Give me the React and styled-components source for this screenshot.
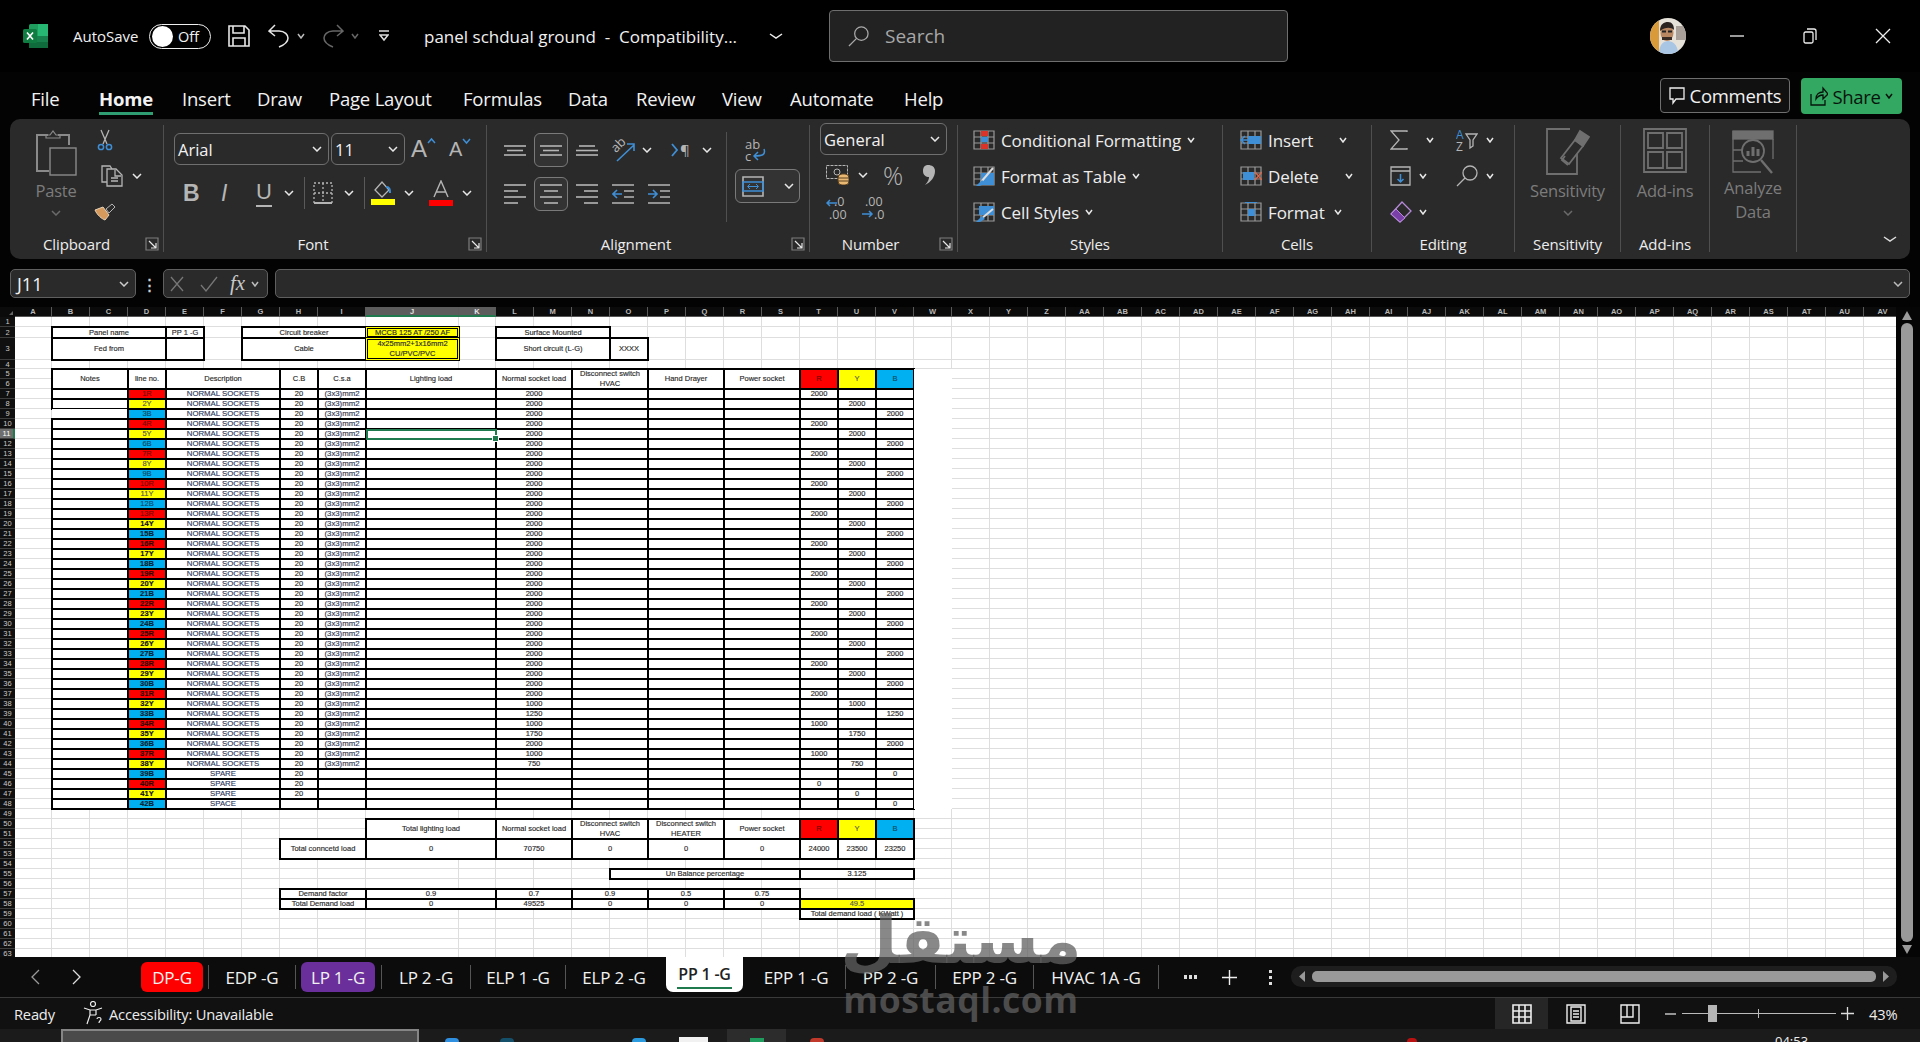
import React from 'react';
import styled, { createGlobalStyle } from 'styled-components';

const UI = `"Open Sans", "Noto Sans", sans-serif`;
const GRAY = '#b5b5b5';
const BLUE = '#3f8fd6';
const DIM = '#7c7c7c';

const Global = createGlobalStyle`
  html, body { margin: 0; padding: 0; background: #000; }
  * { box-sizing: border-box; }
`;

const Page = styled.div`
  position: relative;
  width: 1920px;
  height: 1042px;
  overflow: hidden;
  background: #030303;
  color: #f2f2f2;
  font-family: ${UI};
  display: flex;
  flex-direction: column;
`;

/* generic bits */
const Slot = styled.span`
  flex: none;
  display: flex;
  align-items: center;
  width: ${p => p.$w}px;
  margin-left: ${p => p.$ml || 0}px;
  justify-content: ${p => (p.$center ? 'center' : 'flex-start')};
`;

const IconSvg = styled.svg`
  display: block;
  flex: none;
`;

const Ico = ({ w, h, s = GRAY, sw = 1.3, children }) => (
  <IconSvg width={w} height={h} viewBox={`0 0 ${w} ${h}`} fill="none" stroke={s} strokeWidth={sw}>
    {children}
  </IconSvg>
);

const Chev = ({ c = '#e8e8e8', w = 10 }) => (
  <Ico w={w} h={6} s={c} sw={1.5}>
    <path d={`M1 1l${w / 2 - 1} 4 ${w / 2 - 1}-4`} />
  </Ico>
);

/* ---------- title bar ---------- */
const TitleBar = styled.header`
  height: 72px;
  flex: none;
  display: flex;
  align-items: center;
  padding-left: 23px;
  background: #000;
`;
const TitleLabel = styled.span`
  font-size: 15px;
  color: #f0f0f0;
  white-space: nowrap;
`;
const DocTitle = styled(TitleLabel)`
  font-size: 17px;
`;
const Toggle = styled.span`
  width: 62px;
  height: 25px;
  border: 1.5px solid #eee;
  border-radius: 13px;
  display: flex;
  align-items: center;
  padding-left: 2px;
  gap: 5px;
  font-size: 14.5px;
  &::before {
    content: '';
    width: 21px;
    height: 21px;
    border-radius: 50%;
    background: #fff;
  }
`;
const SearchBox = styled.div`
  width: 459px;
  height: 52px;
  flex: none;
  background: #222;
  border: 1px solid #6e6e6e;
  border-radius: 4px;
  display: flex;
  align-items: center;
  padding-left: 18px;
  gap: 16px;
  font-size: 19px;
  color: #a8a8a8;
`;
const WinButton = styled.span`
  width: 73px;
  flex: none;
  display: flex;
  justify-content: center;
`;

const ExcelLogo = () => (
  <IconSvg width={25} height={24} viewBox="0 0 25 24">
    <rect x="6" y="0" width="19" height="24" rx="1.5" fill="#1f9d5f" />
    <rect x="15" y="0" width="10" height="12" fill="#27b873" />
    <rect x="6" y="12" width="19" height="6" fill="#17804c" />
    <rect x="6" y="18" width="19" height="6" fill="#0f6b3c" />
    <rect x="0" y="5" width="14" height="14" rx="1.5" fill="#107c41" />
    <path d="M4 8.5l6 7M10 8.5l-6 7" stroke="#fff" strokeWidth="1.6" />
  </IconSvg>
);

const Avatar = () => (
  <IconSvg width={36} height={36} viewBox="0 0 36 36">
    <defs>
      <clipPath id="av"><circle cx="18" cy="18" r="18" /></clipPath>
    </defs>
    <g clipPath="url(#av)">
      <rect width="36" height="36" fill="#e6e2da" />
      <rect width="9" height="36" fill="#d99a3a" />
      <rect x="26" y="8" width="10" height="14" fill="#a8a099" />
      <path d="M9 36c0-10 5-13 9-13s10 3 10 13z" fill="#a9c6e4" />
      <ellipse cx="17" cy="15" rx="6.5" ry="8" fill="#b98762" />
      <path d="M10 13c0-7 4-9 8-9s6 3 6 8c-3-3-9-3-14 1z" fill="#2b2320" />
      <rect x="12" y="19" width="10" height="3" fill="#3a2b25" />
      <rect x="12" y="12.5" width="4" height="2" fill="#222" />
      <rect x="18" y="12.5" width="4" height="2" fill="#222" />
    </g>
  </IconSvg>
);

/* ---------- menu row ---------- */
const MenuRow = styled.nav`
  height: 47px;
  flex: none;
  display: flex;
  align-items: flex-start;
  padding: 6px 18px 0 31px;
  background: #030303;
`;
const MenuItem = styled.span`
  flex: none;
  width: ${p => p.$w}px;
  margin-top: 7px;
`;
const MenuLabel = styled.span`
  display: inline-block;
  height: 30px;
  line-height: 27px;
  font-size: 18.5px;
  font-weight: ${p => (p.$active ? 700 : 400)};
  letter-spacing: -0.2px;
  white-space: nowrap;
  border-bottom: 3px solid ${p => (p.$active ? '#2f9e72' : 'transparent')};
`;
const CommentsButton = styled.button`
  margin-left: auto;
  width: 130px;
  height: 35px;
  background: #111;
  border: 1px solid #6f6f6f;
  border-radius: 4px;
  color: #f2f2f2;
  font: 18.5px ${UI};
  letter-spacing: -0.3px;
  display: flex;
  align-items: center;
  justify-content: center;
  gap: 5px;
  padding: 0;
`;
const ShareButton = styled.button`
  margin-left: 11px;
  width: 101px;
  height: 36px;
  background: #33a862;
  border: 0;
  border-radius: 4px;
  color: #07140c;
  font: 18.5px ${UI};
  letter-spacing: -0.3px;
  display: flex;
  align-items: center;
  justify-content: center;
  gap: 4px;
  padding: 0;
`;

/* ---------- ribbon ---------- */
const Ribbon = styled.section`
  height: 140px;
  flex: none;
  margin: 0 10px;
  background: #2a2a2a;
  border-radius: 10px;
  display: flex;
`;
const Group = styled.div`
  width: ${p => p.$w}px;
  flex: none;
  height: 127px;
  margin-top: 6px;
  border-right: 1px solid #4f4f4f;
  display: flex;
  flex-direction: column;
`;
const GroupBody = styled.div`
  height: 103px;
  flex: none;
  display: flex;
  padding-left: ${p => p.$pl || 0}px;
`;
const GroupFoot = styled.div`
  height: 24px;
  padding-top: 8px;
  display: flex;
  align-items: center;
`;
const GroupLabel = styled.span`
  flex: 1;
  text-align: center;
  font-size: 15px;
  line-height: 17px;
  color: #ededed;
  letter-spacing: -0.1px;
  padding-right: ${p => p.$pr || 0}px;
`;
const Launcher = styled.span`
  flex: none;
  width: 18px;
`;
const ToolStack = styled.div`
  display: flex;
  flex-direction: column;
  gap: 12px;
  padding-top: 3px;
`;
const ToolRow = styled.div`
  display: flex;
  align-items: center;
  height: ${p => p.$h || 24}px;
  padding-left: ${p => p.$pl || 0}px;
  margin-top: ${p => p.$mt || 0}px;
`;
const PasteCol = styled.div`
  width: 72px;
  margin-left: 10px;
  padding-top: 5px;
  display: flex;
  flex-direction: column;
  align-items: center;
`;
const BigLabel = styled.span`
  line-height: 24px;
  font-size: 16.5px;
  letter-spacing: -0.2px;
  color: ${DIM};
  text-align: center;
  margin-top: ${p => p.$mt || 0}px;
  margin-bottom: 7px;
`;
const BigButton = styled.div`
  flex: 1;
  display: flex;
  flex-direction: column;
  align-items: center;
  padding-top: ${p => p.$pt || 3}px;
`;
const BigIconWrap = styled.div`
  height: ${p => p.$h || 49}px;
  margin-bottom: 2px;
`;
const Combo = styled.div`
  width: ${p => p.$w}px;
  height: ${p => p.$h || 32}px;
  flex: none;
  margin-left: ${p => p.$ml || 0}px;
  border: 1px solid #6f6f6f;
  border-radius: 6px;
  display: flex;
  align-items: center;
  justify-content: space-between;
  padding: 0 6px 0 3px;
  font-size: 16.5px;
`;
const ToolBox = styled.span`
  width: ${p => p.$w || 34}px;
  height: 34px;
  flex: none;
  display: flex;
  align-items: center;
  justify-content: center;
  background: #333;
  border: 1px solid #7a7a7a;
  border-radius: 6px;
  gap: ${p => p.$gap || 0}px;
`;
const Divider = styled.span`
  display: block;
  width: 1px;
  height: ${p => p.$h || 32}px;
  background: #5a5a5a;
`;
const AlignLeft = styled.div`
  width: 239px;
  flex: none;
  padding: 8px 0 0 17px;
  display: flex;
  flex-direction: column;
  gap: 10px;
`;
const AlignRight = styled.div`
  border-left: 1px solid #505050;
  height: 90px;
  margin-top: 7px;
  padding-left: 8px;
  display: flex;
  flex-direction: column;
`;
const NumberCol = styled.div`
  margin-left: 10px;
  margin-top: -2px;
  display: flex;
  flex-direction: column;
`;
const PercentSign = styled.span`
  font-size: 25px;
  line-height: 24px;
  font-weight: 300;
  color: ${GRAY};
`;
const ListRow = styled.div`
  display: flex;
  align-items: center;
  height: 24px;
  gap: ${p => p.$gap || 6}px;
  white-space: nowrap;
  font-size: 17px;
  letter-spacing: -0.1px;
  color: #ededed;
`;
const CollapseBox = styled.div`
  flex: 1;
  display: flex;
  align-items: flex-end;
  justify-content: flex-end;
  padding: 0 13px 17px 0;
`;

/* ---------- ribbon icons ---------- */
const Launch = () => (
  <Ico w={14} h={14} sw={1.2}>
    <path d="M1 13V1h12v12z" stroke={DIM} />
    <path d="M4 4l7 7M11 6v5H6" stroke="#e8e8e8" />
  </Ico>
);
const PasteIcon = () => (
  <Ico w={41} h={46} s="#8a8a8a" sw={2}>
    <path d="M12 5H1v36h12M22 5h11v10" />
    <path d="M10 8V5h4l3-4 3 4h4v3z" strokeWidth={1.2} />
    <rect x="14" y="18" width="26" height="27" strokeWidth={1.4} />
  </Ico>
);
const CutIcon = () => (
  <Ico w={16} h={22}>
    <path d="M4 1l6 14M12 1L6 15" />
    <circle cx="4" cy="18" r="2.6" stroke={BLUE} strokeWidth={1.5} />
    <circle cx="12" cy="18" r="2.6" stroke={BLUE} strokeWidth={1.5} />
  </Ico>
);
const CopyIcon = () => (
  <Ico w={22} h={22}>
    <path d="M6 17H1V1h8l2 3" />
    <path d="M6 4h9l6 6v11H6zM14 5v6h6M10 13h7M10 16h7" />
  </Ico>
);
const PainterIcon = () => (
  <IconSvg width={22} height={18} viewBox="0 0 22 18" fill="none">
    <path d="M1 7l8-3 6 8-4 5c-3-1-8-5-10-10z" fill="#d69a5d" stroke="#e6d3b8" />
    <path d="M12 6l6-5 3 3-6 6z" fill="#2a2a2a" stroke={GRAY} />
  </IconSvg>
);
const FontGlyph = styled.span`
  font-family: "Liberation Sans", sans-serif;
  font-weight: ${p => p.$w || 400};
  font-style: ${p => (p.$i ? 'italic' : 'normal')};
  font-size: ${p => p.$size || 20}px;
  line-height: 24px;
  color: ${p => p.$c || GRAY};
`;
const BoldIcon = () => <FontGlyph $w={700} $size={23}>B</FontGlyph>;
const UnderlineGlyph = styled(FontGlyph)`
  display: inline-block;
  height: 27px;
  border-bottom: 2px solid ${GRAY};
`;
const GrowA = styled.span`
  display: flex;
  align-items: flex-start;
  font-family: "Liberation Sans", sans-serif;
  font-size: ${p => p.$size}px;
  color: ${GRAY};
  line-height: 26px;
`;
const BordersIcon = () => (
  <Ico w={20} h={22}>
    <path d="M1 1h18v20H1zM10 1v20M1 11h18" strokeDasharray="2 2" />
    <path d="M1 21h18" strokeWidth={2} />
  </Ico>
);
const FillIcon = () => (
  <IconSvg width={24} height={24} viewBox="0 0 24 24" fill="none">
    <path d="M4 9L11 1l7 8-7 7z" stroke={GRAY} strokeWidth="1.3" />
    <path d="M15 6c4 0 4 3 4 6" stroke={BLUE} strokeWidth="2" />
    <rect y="18" width="24" height="6" fill="#ff0" />
  </IconSvg>
);
const FontColorIcon = () => (
  <IconSvg width={24} height={26} viewBox="0 0 24 26" fill="none">
    <path d="M5 17L12 1l7 16M7.5 12h9" stroke={GRAY} strokeWidth="1.4" />
    <rect y="20" width="24" height="6" fill="#f00" />
  </IconSvg>
);
const HLines = ({ rows, h }) => (
  <Ico w={22} h={h} sw={1.6}>
    {rows.map(([a, b, y]) => <path key={y} d={`M${a} ${y}H${b}`} />)}
  </Ico>
);
const AlignTop = () => <HLines h={11} rows={[[0, 22, 1], [3, 19, 5.5], [0, 22, 10]]} />;
const AlignBottom = () => <HLines h={11} rows={[[3, 19, 1], [0, 22, 5.5], [0, 22, 10]]} />;
const ParaLeft = () => <HLines h={21} rows={[[0, 22, 1], [0, 14, 7], [0, 22, 13], [0, 14, 19]]} />;
const ParaCenter = () => <HLines h={21} rows={[[0, 22, 1], [4, 18, 7], [0, 22, 13], [4, 18, 19]]} />;
const ParaRight = () => <HLines h={21} rows={[[0, 22, 1], [8, 22, 7], [0, 22, 13], [8, 22, 19]]} />;
const IndentLess = () => (
  <Ico w={22} h={21} sw={1.6}>
    <path d="M0 1h22M12 7h10M12 13h10M0 19h22" />
    <path d="M10 10H1m4-4l-4 4 4 4" stroke={BLUE} />
  </Ico>
);
const IndentMore = () => (
  <Ico w={22} h={21} sw={1.6}>
    <path d="M0 1h22M12 7h10M12 13h10M0 19h22" />
    <path d="M0 10h9m-4-4l4 4-4 4" stroke={BLUE} />
  </Ico>
);
const SvgLabel = styled.text`
  font-family: ${UI};
  font-size: ${p => p.$size || 13}px;
  fill: ${p => p.$c || GRAY};
  stroke: none;
`;
const OrientIcon = () => (
  <Ico w={24} h={23}>
    <SvgLabel x="0" y="11" transform="rotate(-45 6 8)">ab</SvgLabel>
    <path d="M5 22L22 6M15 5h7v7" stroke={BLUE} strokeWidth={1.6} />
  </Ico>
);
const ParaIcon = () => (
  <Ico w={20} h={14}>
    <path d="M1 1l5 6-5 6" stroke={BLUE} strokeWidth={1.8} />
    <SvgLabel x="9" y="13" $size={15}>¶</SvgLabel>
  </Ico>
);
const WrapIcon = () => (
  <Ico w={21} h={23}>
    <SvgLabel x="0" y="10" $size={13}>ab</SvgLabel>
    <SvgLabel x="0" y="22" $size={13}>c</SvgLabel>
    <path d="M19 10c2 6-2 7-10 7m4-4l-4 4 4 4" stroke={BLUE} strokeWidth={1.5} />
  </Ico>
);
const MergeIcon = () => (
  <Ico w={22} h={21} sw={1.6}>
    <path d="M1 1h20v19H1z" stroke={GRAY} />
    <path d="M1 6h20v9H1z" stroke={BLUE} />
    <path d="M6 10.5h10M8 8l-2.5 2.5L8 13M14 8l2.5 2.5L14 13" stroke={BLUE} strokeWidth={1} />
  </Ico>
);
const AccountingIcon = () => (
  <IconSvg width={23} height={20} viewBox="0 0 23 20" fill="none">
    <rect x="0.5" y="0.5" width="21" height="13" stroke={GRAY} strokeDasharray="3 1" />
    <circle cx="11" cy="7" r="3" stroke={GRAY} />
    <rect x="12" y="9" width="11" height="11" rx="4" fill="#e9b872" stroke="#5c4220" />
    <path d="M12 13h11M12 16h11" stroke="#5c4220" />
  </IconSvg>
);
const CommaIcon = () => (
  <IconSvg width={12} height={20} viewBox="0 0 12 20">
    <path d="M5 0c4 0 7 2 7 6 0 6-4 11-10 14 3-3 4-6 4-8-3 0-6-2-6-6s2-6 5-6z" fill={GRAY} />
  </IconSvg>
);
const DecimalMore = () => (
  <Ico w={24} h={24}>
    <SvgLabel x="8" y="10" $size={12.5}>.0</SvgLabel>
    <SvgLabel x="3" y="23" $size={12.5}>.00</SvgLabel>
    <path d="M11 7H1m3-3L1 7l3 3" stroke={BLUE} strokeWidth={1.5} />
  </Ico>
);
const DecimalLess = () => (
  <Ico w={24} h={24}>
    <SvgLabel x="4" y="10" $size={12.5}>.00</SvgLabel>
    <SvgLabel x="13" y="23" $size={12.5}>.0</SvgLabel>
    <path d="M1 18h10m-3-3l3 3-3 3" stroke={BLUE} strokeWidth={1.5} />
  </Ico>
);
const GridBase = ({ children }) => (
  <IconSvg width={22} height={20} viewBox="0 0 22 20" fill="none">
    <path d="M1 1h20v18H1zM1 7h20M1 13h20M8 1v18M15 1v18" stroke="#9a9a9a" strokeWidth="1.2" />
    {children}
  </IconSvg>
);
const CondFormatIcon = () => (
  <GridBase>
    <rect x="8" y="1" width="7" height="5" fill="#d9332a" />
    <rect x="8" y="7" width="7" height="5" fill={BLUE} />
    <rect x="8" y="14" width="7" height="5" fill="#d9332a" />
  </GridBase>
);
const FormatTableIcon = () => (
  <GridBase>
    <path d="M8 7h13v12H8z" fill={BLUE} />
    <path d="M20 2L8 16" stroke="#ddd" strokeWidth="2" />
    <path d="M9 14l3 3-5 3H3z" fill={BLUE} />
  </GridBase>
);
const CellStyleIcon = () => (
  <GridBase>
    <path d="M6 4h15v9H6z" fill={BLUE} />
    <path d="M20 7L8 17" stroke="#ddd" strokeWidth="2" />
    <path d="M9 14l3 3-5 3H3z" fill={BLUE} />
  </GridBase>
);
const InsertCellIcon = () => (
  <GridBase>
    <rect x="8" y="6" width="13" height="8" fill={BLUE} />
    <path d="M14 10H1m4-4l-4 4 4 4" stroke={BLUE} strokeWidth="1.5" />
  </GridBase>
);
const DeleteCellIcon = () => (
  <GridBase>
    <rect x="3" y="6" width="11" height="8" fill={BLUE} />
    <path d="M15 6l7 8M22 6l-7 8" stroke="#d8674e" strokeWidth="1.4" />
  </GridBase>
);
const FormatCellIcon = () => (
  <GridBase>
    <rect x="8" y="7" width="7" height="7" fill={BLUE} />
    <path d="M5 0h12" stroke={BLUE} strokeWidth="2" />
  </GridBase>
);
const SumIcon = () => (
  <Ico w={18} h={20}>
    <path d="M17 2V1H1l8 9-8 9h16v-1" />
  </Ico>
);
const SortIcon = () => (
  <Ico w={22} h={22}>
    <SvgLabel x="0" y="10" $size={12} $c={BLUE}>A</SvgLabel>
    <SvgLabel x="0" y="22" $size={12}>Z</SvgLabel>
    <path d="M10 5h11l-4 6v6l-3 2v-8z" />
  </Ico>
);
const FillDownIcon = () => (
  <Ico w={21} h={20}>
    <path d="M1 1h19v18H1zM1 5h19" />
    <path d="M10.5 8v8m-3-3l3 3 3-3" stroke={BLUE} strokeWidth={1.5} />
  </Ico>
);
const FindIcon = ({ s = GRAY, size = 22 }) => (
  <IconSvg width={size} height={size} viewBox="0 0 22 22" fill="none" stroke={s} strokeWidth="1.3">
    <circle cx="14" cy="8" r="7" />
    <path d="M9 13l-8 8" />
  </IconSvg>
);
const EraserIcon = () => (
  <IconSvg width={22} height={22} viewBox="0 0 22 22" fill="none">
    <path d="M1 13L12 1l9 9-11 11z" stroke="#b68ad8" strokeWidth="1.3" />
    <path d="M1 13l5-5 9 9-5 4z" fill="#7b3fa8" stroke="#b68ad8" />
  </IconSvg>
);
const SensitivityIcon = () => (
  <Ico w={44} h={47} s="#6f6f6f" sw={1.8}>
    <path d="M24 1H1v45h30V26" />
    <path d="M15 30l14-18 8 6-14 18z" />
    <path d="M29 12l5-9 9 6-6 9z" fill="#6f6f6f" />
    <path d="M19 28l-3 4 6 5" />
  </Ico>
);
const AddinsIcon = () => (
  <Ico w={44} h={45} s="#6f6f6f" sw={1.8}>
    <path d="M1 1h42v43H1z" />
    <path d="M5 5h15v15H5zM24 5h15v15H24zM5 24h15v16H5zM24 24h15v16H24z" />
  </Ico>
);
const AnalyzeIcon = () => (
  <Ico w={42} h={44} s="#6f6f6f" sw={1.3}>
    <rect x="1" y="1" width="40" height="8" fill="#6f6f6f" />
    <path d="M1 1v41h28M41 9v20M1 20h10M1 31h10" />
    <circle cx="21" cy="21" r="11" strokeWidth={1.8} />
    <path d="M29 30l11 13" strokeWidth={2.4} />
    <path d="M16 26v-5M21 26v-9M26 26v-7" strokeWidth={3} />
  </Ico>
);

/* ---------- formula bar ---------- */
const FormulaBar = styled.div`
  height: 29px;
  flex: none;
  margin: 10px 10px 0;
  display: flex;
  align-items: stretch;
`;
const FieldBox = styled.div`
  background: #2a2a2a;
  border: 1px solid #5f5f5f;
  border-radius: 5px;
  display: flex;
  align-items: center;
  flex: ${p => (p.$grow ? 1 : 'none')};
  width: ${p => (p.$w ? `${p.$w}px` : 'auto')};
  margin-left: ${p => p.$ml || 0}px;
  padding: 0 6px;
  justify-content: ${p => (p.$between ? 'space-between' : 'flex-start')};
  font-size: 18px;
`;
const KebabDots = styled.span`
  width: 27px;
  flex: none;
  display: flex;
  justify-content: center;
  align-items: center;
  font-weight: 700;
  font-size: 15px;
  color: #d0d0d0;
`;
const FxText = styled.span`
  font-family: "Liberation Serif", serif;
  font-style: italic;
  font-size: 21px;
  color: #c8c8c8;
`;

/* ---------- sheet ---------- */
const SheetArea = styled.div`
  height: 650px;
  flex: none;
  margin-top: 9px;
  display: flex;
  background: #050505;
`;
const SheetClip = styled.div`
  width: 1896px;
  height: 650px;
  flex: none;
  overflow: hidden;
`;
const Grid = styled.div`
  display: grid;
  grid-template-columns: ${p => p.$cols};
  grid-template-rows: ${p => p.$rows};
  width: max-content;
  font-family: "Liberation Sans", Arial, sans-serif;
`;
const Corner = styled.div`
  grid-column: 1;
  grid-row: 1;
  background: #0b0b0b;
  display: flex;
  align-items: flex-end;
  justify-content: flex-end;
  padding: 0 2px 2px 0;
  &::after {
    content: '';
    border-left: 4px solid transparent;
    border-bottom: 4px solid #666;
  }
`;
const ColHead = styled.div`
  grid-row: 1;
  grid-column: ${p => p.$col};
  background: ${p => (p.$on ? '#5c5c5c' : '#0b0b0b')};
  border-right: 1px solid #5a5a5a;
  border-bottom: ${p => (p.$on ? '2px solid #1f7a4d' : '1px solid #555')};
  color: ${p => (p.$on ? '#e4e4e4' : '#b9b9b9')};
  font-size: 7.5px;
  font-weight: 700;
  line-height: 9px;
  text-align: center;
`;
const RowHead = styled.div`
  grid-column: 1;
  grid-row: ${p => p.$row};
  background: ${p => (p.$on ? '#6e6e6e' : '#101010')};
  border-bottom: 1px solid #3c3c3c;
  border-right: ${p => (p.$on ? '2px solid #1f7a4d' : '0')};
  color: ${p => (p.$on ? '#fff' : '#c9c9c9')};
  font-size: 7.5px;
  display: flex;
  align-items: center;
  justify-content: center;
`;
const Cell = styled.div`
  position: relative;
  grid-column: ${p => p.$col} / span ${p => p.$cs};
  grid-row: ${p => p.$row} / span ${p => p.$rs};
  min-width: 0;
  min-height: 0;
  background: ${p => p.$bg || '#fff'};
  color: ${p => p.$c || '#2a2a2a'};
  font-size: ${p => p.$size || 7.5}px;
  font-weight: ${p => (p.$bold ? 700 : 400)};
  line-height: ${p => p.$lh || 8}px;
  -webkit-text-stroke: 0.15px currentColor;
  white-space: pre-line;
  text-align: center;
  display: flex;
  align-items: center;
  justify-content: center;
  ${p => {
    if (p.$double) return `border: 1px solid ${p.$bg}; outline: 1px solid #000; box-shadow: inset 0 0 0 1px #000;`;
    if (p.$thick) return 'border: 1px solid #000; outline: 1px solid #000;';
    if (p.$blank) return 'border: 0;';
    return 'border-right: 1px solid #dedede; border-bottom: 1px solid #dedede;';
  }}
`;
const Selection = styled.span`
  position: absolute;
  inset: -1px -2px -2px -1px;
  border: 2px solid #1f7a4d;
  z-index: 2;
  &::after {
    content: '';
    position: absolute;
    right: -3px;
    bottom: -3px;
    width: 5px;
    height: 5px;
    background: #1f7a4d;
    outline: 1px solid #fff;
  }
`;
const VScroll = styled.div`
  flex: 1;
  display: flex;
  flex-direction: column;
  align-items: center;
  padding: 4px 2px 3px 0;
  gap: 3px;
`;
const VThumb = styled.div`
  flex: 1;
  width: 12px;
  border-radius: 6px;
  background: #9a9a9a;
`;
const VArrow = styled.span`
  width: 0;
  height: 0;
  border-left: 5px solid transparent;
  border-right: 5px solid transparent;
  ${p => (p.$up ? 'border-bottom: 9px solid #9a9a9a;' : 'border-top: 9px solid #9a9a9a;')}
`;

const colName = i => (i < 26 ? String.fromCharCode(65 + i) : 'A' + String.fromCharCode(65 + i - 26));
const colIdx = s => (s.length === 1 ? s.charCodeAt(0) - 65 : 26 + s.charCodeAt(1) - 65) + 2;
const COL_W = [37, 38, 38, 38, 38, 38, 38, 38, 48, 93, 37, ...Array(37).fill(38)];
const ROW_H = Array.from({ length: 63 }, (_, i) => [10, 11, 22, 9][i] || 10);
const RED = '#ff0000';
const YEL = '#ffff00';
const SKY = '#00b0f0';

const buildCells = () => {
  const out = [];
  const add = (c1, c2, r1, r2, text = '', o = {}) =>
    out.push({ col: colIdx(c1), cs: colIdx(c2) - colIdx(c1) + 1, row: r1 + 1, rs: r2 - r1 + 1, text, thick: true, ...o });

  // header blocks
  add('B', 'D', 2, 2, 'Panel name');
  add('E', 'E', 2, 2, 'PP 1 -G');
  add('B', 'D', 3, 3, 'Fed from');
  add('E', 'E', 3, 3);
  add('G', 'I', 2, 2, 'Circuit breaker');
  add('J', 'J', 2, 2, 'MCCB 125 AT /250 AF', { bg: YEL, double: true });
  add('G', 'I', 3, 3, 'Cable');
  add('J', 'J', 3, 3, '4x25mm2+1x16mm2\nCU/PVC/PVC', { bg: YEL, double: true, lh: 10 });
  add('L', 'N', 2, 2, 'Surface Mounted');
  add('L', 'N', 3, 3, 'Short circuit (L-G)');
  add('O', 'O', 3, 3, 'XXXX');

  const loadHead = (r1, r2, nxt) => {
    add('J', 'K', r1, r2, nxt.light);
    add('L', 'M', r1, r2, 'Normal socket load');
    add('N', 'O', r1, r2, 'Disconnect switch\nHVAC', { lh: 10 });
    add('P', 'Q', r1, r2, nxt.hand, { lh: 10 });
    add('R', 'S', r1, r2, 'Power socket');
    add('T', 'T', r1, r2, 'R', { bg: RED, c: '#6d0000' });
    add('U', 'U', r1, r2, 'Y', { bg: YEL, c: '#555' });
    add('V', 'V', r1, r2, 'B', { bg: SKY, c: '#0b4a66' });
  };

  // main table head
  add('B', 'C', 5, 6, 'Notes');
  add('D', 'D', 5, 6, 'line no.');
  add('E', 'G', 5, 6, 'Description');
  add('H', 'H', 5, 6, 'C.B');
  add('I', 'I', 5, 6, 'C.s.a');
  loadHead(5, 6, { light: 'Lighting load', hand: 'Hand Drayer' });

  // circuits
  const special = { 32: 1000, 33: 1250, 34: 1000, 35: 1750, 36: 2000, 37: 1000, 38: 750, 39: '', 40: '', 41: '', 42: '' };
  for (let n = 1; n <= 42; n++) {
    const r = n + 6;
    const phase = (n - 1) % 3;
    const load = n in special ? special[n] : 2000;
    const bold = n >= 14;
    const tone = [
      { bg: RED, c: bold ? '#300' : '#7a0000' },
      { bg: YEL, c: bold ? '#111' : '#555' },
      { bg: SKY, c: bold ? '#07222e' : '#0b4a66' },
    ][phase];
    if (n === 3) add('B', 'C', r, r, '', { thick: false, blank: true });
    else add('B', 'C', r, r);
    add('D', 'D', r, r, `${n}${'RYB'[phase]}`, { ...tone, bold });
    const desc = n <= 38 ? 'NORMAL SOCKETS' : n === 42 ? 'SPACE' : 'SPARE';
    add('E', 'G', r, r, desc, { c: '#2f3a60', size: 7.8 });
    add('H', 'H', r, r, n === 42 ? '' : '20');
    add('I', 'I', r, r, n <= 38 ? '(3x3)mm2' : '', { c: '#343a52', size: 7.8 });
    add('J', 'K', r, r, '', { selected: n === 5 });
    add('L', 'M', r, r, String(load));
    add('N', 'O', r, r);
    add('P', 'Q', r, r);
    add('R', 'S', r, r);
    const shown = load === '' ? '0' : String(load);
    add('T', 'T', r, r, phase === 0 ? shown : '');
    add('U', 'U', r, r, phase === 1 ? shown : '');
    add('V', 'V', r, r, phase === 2 ? shown : '');
  }

  // totals
  loadHead(50, 51, { light: 'Total lighting load', hand: 'Disconnect switch\nHEATER' });
  add('H', 'I', 52, 53, 'Total conncetd load');
  [['J', 'K', '0'], ['L', 'M', '70750'], ['N', 'O', '0'], ['P', 'Q', '0'], ['R', 'S', '0'], ['T', 'T', '24000'], ['U', 'U', '23500'], ['V', 'V', '23250']]
    .forEach(([a, b, t]) => add(a, b, 52, 53, t));
  add('O', 'S', 55, 55, 'Un Balance percentage');
  add('T', 'V', 55, 55, '3.125');
  add('H', 'I', 57, 57, 'Demand factor');
  add('H', 'I', 58, 58, 'Total Demand load');
  [['J', 'K', '0.9', '0'], ['L', 'M', '0.7', '49525'], ['N', 'O', '0.9', '0'], ['P', 'Q', '0.5', '0'], ['R', 'S', '0.75', '0']]
    .forEach(([a, b, f, d]) => {
      add(a, b, 57, 57, f);
      add(a, b, 58, 58, d);
    });
  add('T', 'V', 58, 58, '49.5', { bg: YEL, c: '#555' });
  add('T', 'V', 59, 59, 'Total demand load  ( KWatt )');
  // column W has no grid lines alongside the table
  for (let r = 5; r <= 48; r++) out.push({ col: colIdx('W'), cs: 1, row: r + 1, rs: 1, text: '', wBlank: true });
  return out;
};

const Sheet = () => {
  const merged = buildCells();
  const taken = new Set();
  merged.forEach(m => {
    for (let r = m.row; r < m.row + m.rs; r++) for (let c = m.col; c < m.col + m.cs; c++) taken.add(`${r}:${c}`);
  });
  const plain = [];
  for (let r = 2; r <= 64; r++) {
    for (let c = 2; c <= 49; c++) {
      if (!taken.has(`${r}:${c}`)) plain.push(<Cell key={`${r}:${c}`} $col={c} $row={r} $cs={1} $rs={1} />);
    }
  }
  return (
    <Grid
      $cols={`15px ${COL_W.map(w => `${w}px`).join(' ')}`}
      $rows={`10px ${ROW_H.map(h => `${h}px`).join(' ')}`}
    >
      <Corner />
      {COL_W.map((_, i) => (
        <ColHead key={i} $col={i + 2} $on={i === 9 || i === 10}>{colName(i)}</ColHead>
      ))}
      {ROW_H.map((_, i) => (
        <RowHead key={i} $row={i + 2} $on={i === 10}>{i + 1}</RowHead>
      ))}
      {plain}
      {merged.map(m => (
        <Cell
          key={`m${m.row}:${m.col}`}
          $col={m.col}
          $cs={m.cs}
          $row={m.row}
          $rs={m.rs}
          $thick={m.thick}
          $blank={m.blank || m.wBlank}
          $double={m.double}
          $bg={m.bg}
          $c={m.c}
          $bold={m.bold}
          $size={m.size}
          $lh={m.lh}
        >
          {m.text}
          {m.selected && <Selection />}
        </Cell>
      ))}
    </Grid>
  );
};

/* ---------- sheet tabs ---------- */
const TabBar = styled.div`
  height: 40px;
  flex: none;
  display: flex;
  align-items: flex-start;
  padding-top: 5px;
  background: #0c0c0c;
  font-size: 17px;
  letter-spacing: -0.2px;
`;
const SheetTab = styled.span`
  flex: none;
  width: ${p => p.$w}px;
  height: 30px;
  margin-left: ${p => p.$ml || 0}px;
  border-radius: ${p => (p.$bg ? 6 : 0)}px;
  background: ${p => p.$bg || 'transparent'};
  display: flex;
  align-items: center;
  justify-content: center;
  white-space: nowrap;
`;
const ActiveTab = styled.span`
  flex: none;
  width: 77px;
  height: 35px;
  margin: -5px 0 0 ${p => p.$ml}px;
  background: #fff;
  color: #222;
  border-radius: 0 0 7px 7px;
  font-size: 16px;
  font-weight: 600;
  display: flex;
  flex-direction: column;
  align-items: center;
  justify-content: flex-end;
  white-space: nowrap;
  &::after {
    content: '';
    width: 55px;
    height: 2px;
    background: #1f7a4d;
    margin: 2px 0 3px;
  }
`;
const TabSep = styled.span`
  flex: none;
  width: 1px;
  height: 24px;
  margin: 3px 0 0 ${p => p.$ml || 0}px;
  background: #555;
`;
const BarGlyph = styled.span`
  flex: none;
  height: 30px;
  display: flex;
  align-items: center;
  justify-content: center;
  width: ${p => p.$w}px;
  margin-left: ${p => p.$ml || 0}px;
  color: #ddd;
`;
const HScroll = styled.div`
  width: 606px;
  height: 21px;
  flex: none;
  margin: 4px 0 0 ${p => p.$ml}px;
  background: #1e1e1e;
  border-radius: 10px;
  display: flex;
  align-items: center;
  padding: 0 8px;
  gap: 7px;
`;
const HThumb = styled.div`
  flex: 1;
  height: 11px;
  border-radius: 5px;
  background: #999;
`;

/* ---------- status + taskbar ---------- */
const StatusBar = styled.footer`
  height: 32px;
  flex: none;
  display: flex;
  align-items: center;
  padding-left: 14px;
  background: #111;
  border-top: 1px solid #3a3a3a;
  font-size: 14.7px;
  letter-spacing: -0.2px;
  color: #ededed;
  white-space: nowrap;
`;
const ViewButton = styled.span`
  flex: none;
  width: 53px;
  height: 31px;
  display: flex;
  align-items: center;
  justify-content: center;
  background: ${p => (p.$on ? '#262626' : 'transparent')};
  margin-left: ${p => p.$ml || 0}px;
`;
const Slider = styled.span`
  position: relative;
  width: 154px;
  height: 1px;
  flex: none;
  margin-left: ${p => p.$ml}px;
  background: #bbb;
  &::before {
    content: '';
    position: absolute;
    left: 26px;
    top: -8px;
    width: 9px;
    height: 17px;
    background: #b5b5b5;
  }
  &::after {
    content: '';
    position: absolute;
    left: 76px;
    top: -4px;
    width: 1px;
    height: 9px;
    background: #bbb;
  }
`;
const Taskbar = styled.div`
  height: 13px;
  flex: none;
  overflow: hidden;
  display: flex;
  align-items: flex-start;
  background: #1b1b1b;
`;
const PreviewTab = styled.span`
  flex: none;
  width: 358px;
  height: 13px;
  margin-left: 61px;
  background: #4a4a4a;
  border: 2px solid #858585;
  border-bottom: 0;
`;
const TrayDot = styled.span`
  flex: none;
  width: ${p => p.$w || 14}px;
  height: ${p => p.$h || 4}px;
  margin: ${p => p.$t || 9}px 0 0 ${p => p.$ml}px;
  border-radius: ${p => (p.$square ? 0 : '7px 7px 0 0')};
  background: ${p => p.$bg};
`;
const HoverApp = styled.span`
  flex: none;
  width: 59px;
  height: 13px;
  margin-left: ${p => p.$ml}px;
  background: #2c2c2c;
  display: flex;
  justify-content: center;
  padding-top: 9px;
  &::after {
    content: '';
    width: 14px;
    height: 4px;
    background: #1f9d5f;
  }
`;
const ClockText = styled.span`
  flex: none;
  margin: 4px 0 0 ${p => p.$ml}px;
  font-size: 13px;
  line-height: 16px;
  color: #eee;
`;

/* ---------- watermark ---------- */
const Watermark = styled.div`
  position: absolute;
  left: 845px;
  top: 900px;
  width: 232px;
  display: flex;
  flex-direction: column;
  align-items: center;
  color: rgba(96, 96, 96, 0.75);
  pointer-events: none;
`;
const WatermarkAr = styled.span`
  font-family: "DejaVu Sans", sans-serif;
  font-weight: 700;
  font-size: 66px;
  line-height: 82px;
  white-space: nowrap;
`;
const WatermarkEn = styled.span`
  font-family: "Open Sans", sans-serif;
  font-weight: 700;
  font-size: 35.5px;
  line-height: 40px;
  margin-top: -3px;
  white-space: nowrap;
  letter-spacing: 0.5px;
`;

const MENU = [
  ['File', 68], ['Home', 83, true], ['Insert', 75], ['Draw', 72], ['Page Layout', 134], ['Formulas', 105],
  ['Data', 68], ['Review', 86], ['View', 68], ['Automate', 114], ['Help', 60],
];

const App = () => (
  <Page>
    <Global />
    <TitleBar>
      <Slot $w={50}><ExcelLogo /></Slot>
      <Slot $w={76}><TitleLabel>AutoSave</TitleLabel></Slot>
      <Slot $w={79}><Toggle>Off</Toggle></Slot>
      <Slot $w={40}>
        <Ico w={22} h={22} s="#e6e6e6" sw={1.6}>
          <path d="M1 1h16l4 4v16H1zM5 1v7h11V1M5 21v-8h12v8" />
        </Ico>
      </Slot>
      <Slot $w={29}>
        <Ico w={21} h={24} s="#e6e6e6" sw={1.5}>
          <path d="M7 1L1 7l6 5M1 7h10c6 0 9 4 9 7 0 4-4 7-9 9" />
        </Ico>
      </Slot>
      <Slot $w={26}><Chev c="#bbb" w={8} /></Slot>
      <Slot $w={28}>
        <Ico w={21} h={24} s="#666" sw={1.5}>
          <path d="M14 1l6 6-6 5M20 7H10C4 7 1 11 1 14c0 4 4 7 9 9" />
        </Ico>
      </Slot>
      <Slot $w={28}><Chev c="#666" w={8} /></Slot>
      <Slot $w={45}>
        <Ico w={10} h={12} s="#ddd" sw={1.5}>
          <path d="M0 1h10M1 5l4 5 4-5z" />
        </Ico>
      </Slot>
      <Slot $w={345}><DocTitle>panel schdual ground &nbsp;-&nbsp; Compatibility...</DocTitle></Slot>
      <Slot $w={60}><Chev c="#eee" w={14} /></Slot>
      <SearchBox>
        <FindIcon s="#aaa" size={21} />
        Search
      </SearchBox>
      <Slot $w={36} $ml={362}><Avatar /></Slot>
      <Slot $w={14} />
      <WinButton><Ico w={14} h={4} s="#eee"><path d="M0 2h14" /></Ico></WinButton>
      <WinButton>
        <Ico w={14} h={16} s="#eee" sw={1.3}>
          <rect x="1" y="4" width="9" height="11" rx="1.5" />
          <path d="M4 1h7a2 2 0 0 1 2 2v9" />
        </Ico>
      </WinButton>
      <WinButton><Ico w={16} h={16} s="#eee"><path d="M1 1l14 14M15 1L1 15" /></Ico></WinButton>
    </TitleBar>

    <MenuRow>
      {MENU.map(([label, w, active]) => (
        <MenuItem key={label} $w={w}><MenuLabel $active={active}>{label}</MenuLabel></MenuItem>
      ))}
      <CommentsButton>
        <Ico w={16} h={20} s="#eee"><path d="M1 2h14v11H7l-3 4v-4H1z" /></Ico>
        Comments
      </CommentsButton>
      <ShareButton>
        <Ico w={18} h={20} s="#07140c"><path d="M1 8v11h14v-5M6 13c0-5 3-7 7-7V2l5 6-5 5V9c-3 0-5 1-7 4z" /></Ico>
        Share
        <Chev c="#07140c" w={8} />
      </ShareButton>
    </MenuRow>

    <Ribbon>
      <Group $w={154}>
        <GroupBody>
          <PasteCol>
            <PasteIcon />
            <BigLabel $mt={3}>Paste</BigLabel>
            <Chev c="#6a6a6a" />
          </PasteCol>
          <ToolStack>
            <ToolRow><Slot $w={26} $center><CutIcon /></Slot></ToolRow>
            <ToolRow>
              <Slot $w={40} $center><CopyIcon /></Slot>
              <Chev />
            </ToolRow>
            <ToolRow><Slot $w={26} $center><PainterIcon /></Slot></ToolRow>
          </ToolStack>
        </GroupBody>
        <GroupFoot><GroupLabel $pr={2}>Clipboard</GroupLabel><Launcher><Launch /></Launcher></GroupFoot>
      </Group>

      <Group $w={323}>
        <GroupBody>
          <div>
            <ToolRow $h={32} $pl={10} $mt={8}>
              <Combo $w={155}>Arial<Chev /></Combo>
              <Combo $w={74} $ml={2}>11<Chev /></Combo>
              <Slot $w={38} $ml={6}>
                <GrowA $size={24}>A<Ico w={9} h={14} s={BLUE} sw={1.5}><path d="M1 7l3.5-4L8 7" /></Ico></GrowA>
              </Slot>
              <GrowA $size={20}>A<Ico w={9} h={14} s={BLUE} sw={1.5}><path d="M1 3l3.5 4L8 3" /></Ico></GrowA>
            </ToolRow>
            <ToolRow $h={34} $pl={19} $mt={11}>
              <Slot $w={38}><BoldIcon /></Slot>
              <Slot $w={35}><FontGlyph $i $size={23}>I</FontGlyph></Slot>
              <Slot $w={28}><UnderlineGlyph $size={22}>U</UnderlineGlyph></Slot>
              <Slot $w={20}><Chev /></Slot>
              <Slot $w={9}><Divider /></Slot>
              <Slot $w={31}><BordersIcon /></Slot>
              <Slot $w={20}><Chev /></Slot>
              <Slot $w={7}><Divider /></Slot>
              <Slot $w={33}><FillIcon /></Slot>
              <Slot $w={25}><Chev /></Slot>
              <Slot $w={33}><FontColorIcon /></Slot>
              <Slot $w={10}><Chev /></Slot>
            </ToolRow>
          </div>
        </GroupBody>
        <GroupFoot><GroupLabel $pr={6}>Font</GroupLabel><Launcher><Launch /></Launcher></GroupFoot>
      </Group>

      <Group $w={323}>
        <GroupBody>
          <AlignLeft>
            <ToolRow $h={34}>
              <Slot $w={30}><AlignTop /></Slot>
              <ToolBox><AlignTop /></ToolBox>
              <Slot $w={36} $ml={8}><AlignBottom /></Slot>
              <Slot $w={30}><OrientIcon /></Slot>
              <Slot $w={29}><Chev /></Slot>
              <Slot $w={31}><ParaIcon /></Slot>
              <Slot $w={10}><Chev /></Slot>
            </ToolRow>
            <ToolRow $h={34}>
              <Slot $w={30}><ParaLeft /></Slot>
              <ToolBox><ParaCenter /></ToolBox>
              <Slot $w={36} $ml={8}><ParaRight /></Slot>
              <Slot $w={36}><IndentLess /></Slot>
              <Slot $w={36}><IndentMore /></Slot>
            </ToolRow>
          </AlignLeft>
          <AlignRight>
            <ToolRow $h={37}><Slot $w={40} $center><WrapIcon /></Slot></ToolRow>
            <ToolBox $w={65} $gap={20}><MergeIcon /><Chev /></ToolBox>
          </AlignRight>
        </GroupBody>
        <GroupFoot><GroupLabel $pr={6}>Alignment</GroupLabel><Launcher><Launch /></Launcher></GroupFoot>
      </Group>

      <Group $w={148}>
        <GroupBody>
          <NumberCol>
            <Combo $w={127}>General<Chev /></Combo>
            <ToolRow $h={24} $pl={6} $mt={8}>
              <Slot $w={32}><AccountingIcon /></Slot>
              <Slot $w={25}><Chev /></Slot>
              <Slot $w={40}><PercentSign>%</PercentSign></Slot>
              <CommaIcon />
            </ToolRow>
            <ToolRow $h={24} $pl={6} $mt={9}>
              <Slot $w={35}><DecimalMore /></Slot>
              <DecimalLess />
            </ToolRow>
          </NumberCol>
        </GroupBody>
        <GroupFoot><GroupLabel $pr={8}>Number</GroupLabel><Launcher><Launch /></Launcher></GroupFoot>
      </Group>

      <Group $w={265}>
        <GroupBody $pl={15}>
          <ToolStack>
            <ListRow><CondFormatIcon />Conditional Formatting<Chev w={8} /></ListRow>
            <ListRow><FormatTableIcon />Format as Table<Chev w={8} /></ListRow>
            <ListRow><CellStyleIcon />Cell Styles<Chev w={8} /></ListRow>
          </ToolStack>
        </GroupBody>
        <GroupFoot><GroupLabel>Styles</GroupLabel></GroupFoot>
      </Group>

      <Group $w={149}>
        <GroupBody $pl={17}>
          <ToolStack>
            <ListRow><InsertCellIcon /><Slot $w={65}>Insert</Slot><Chev w={8} /></ListRow>
            <ListRow><DeleteCellIcon /><Slot $w={71}>Delete</Slot><Chev w={8} /></ListRow>
            <ListRow><FormatCellIcon /><Slot $w={60}>Format</Slot><Chev w={8} /></ListRow>
          </ToolStack>
        </GroupBody>
        <GroupFoot><GroupLabel>Cells</GroupLabel></GroupFoot>
      </Group>

      <Group $w={143}>
        <GroupBody $pl={18}>
          <ToolStack>
            <ToolRow>
              <Slot $w={36}><SumIcon /></Slot>
              <Slot $w={30}><Chev w={8} /></Slot>
              <Slot $w={30}><SortIcon /></Slot>
              <Chev w={8} />
            </ToolRow>
            <ToolRow>
              <Slot $w={29}><FillDownIcon /></Slot>
              <Slot $w={37}><Chev w={8} /></Slot>
              <Slot $w={30}><FindIcon /></Slot>
              <Chev w={8} />
            </ToolRow>
            <ToolRow>
              <Slot $w={29}><EraserIcon /></Slot>
              <Chev w={8} />
            </ToolRow>
          </ToolStack>
        </GroupBody>
        <GroupFoot><GroupLabel>Editing</GroupLabel></GroupFoot>
      </Group>

      <Group $w={106}>
        <GroupBody>
          <BigButton>
            <BigIconWrap><SensitivityIcon /></BigIconWrap>
            <BigLabel>Sensitivity</BigLabel>
            <Chev c="#6a6a6a" />
          </BigButton>
        </GroupBody>
        <GroupFoot><GroupLabel>Sensitivity</GroupLabel></GroupFoot>
      </Group>

      <Group $w={89}>
        <GroupBody>
          <BigButton>
            <BigIconWrap><AddinsIcon /></BigIconWrap>
            <BigLabel>Add-ins</BigLabel>
          </BigButton>
        </GroupBody>
        <GroupFoot><GroupLabel>Add-ins</GroupLabel></GroupFoot>
      </Group>

      <Group $w={87}>
        <GroupBody>
          <BigButton $pt={5}>
            <BigIconWrap $h={47}><AnalyzeIcon /></BigIconWrap>
            <BigLabel>Analyze<br />Data</BigLabel>
          </BigButton>
        </GroupBody>
      </Group>

      <CollapseBox><Chev c="#ddd" w={14} /></CollapseBox>
    </Ribbon>

    <FormulaBar>
      <FieldBox $w={126} $between>J11<Chev c="#ccc" /></FieldBox>
      <KebabDots>⋮</KebabDots>
      <FieldBox $w={105}>
        <Slot $w={30}><Ico w={14} h={16} s="#777"><path d="M1 1l12 14M13 1L1 15" /></Ico></Slot>
        <Slot $w={30}><Ico w={18} h={16} s="#777"><path d="M1 9l5 6L17 1" /></Ico></Slot>
        <Slot $w={21}><FxText>fx</FxText></Slot>
        <Chev c="#bbb" w={8} />
      </FieldBox>
      <FieldBox $grow $ml={7} $between>
        <span />
        <Chev c="#bbb" />
      </FieldBox>
    </FormulaBar>

    <SheetArea>
      <SheetClip><Sheet /></SheetClip>
      <VScroll>
        <VArrow $up />
        <VThumb />
        <VArrow />
      </VScroll>
    </SheetArea>

    <TabBar>
      <BarGlyph $w={12} $ml={29}><Ico w={9} h={16} s="#999"><path d="M8 1L1 8l7 7" /></Ico></BarGlyph>
      <BarGlyph $w={12} $ml={29}><Ico w={9} h={16} s="#ddd"><path d="M1 1l7 7-7 7" /></Ico></BarGlyph>
      <SheetTab $w={62} $ml={59} $bg="#ff0000">DP-G</SheetTab>
      <TabSep $ml={5} />
      <SheetTab $w={86}>EDP -G</SheetTab>
      <TabSep />
      <SheetTab $w={74} $ml={5} $bg="#6a2f9a">LP 1 -G</SheetTab>
      <TabSep $ml={6} />
      <SheetTab $w={88}>LP 2 -G</SheetTab>
      <TabSep />
      <SheetTab $w={94}>ELP 1 -G</SheetTab>
      <TabSep />
      <SheetTab $w={96}>ELP 2 -G</SheetTab>
      <ActiveTab $ml={4}>PP 1 -G</ActiveTab>
      <SheetTab $w={98} $ml={4}>EPP 1 -G</SheetTab>
      <TabSep />
      <SheetTab $w={89}>PP 2 -G</SheetTab>
      <TabSep />
      <SheetTab $w={97}>EPP 2 -G</SheetTab>
      <TabSep />
      <SheetTab $w={124}>HVAC 1A -G</SheetTab>
      <TabSep />
      <BarGlyph $w={62}>
        <Ico w={13} h={4} s="#ddd" sw={0}><path d="M0 0h3v4H0zM5 0h3v4H5zM10 0h3v4h-3z" fill="#ddd" /></Ico>
      </BarGlyph>
      <BarGlyph $w={16}><Ico w={15} h={15} s="#eee" sw={1.4}><path d="M7.5 0v15M0 7.5h15" /></Ico></BarGlyph>
      <BarGlyph $w={4} $ml={31}><Ico w={3} h={15} s="#ddd" sw={0}><path d="M0 0h3v3H0zM0 6h3v3H0zM0 12h3v3H0z" fill="#ddd" /></Ico></BarGlyph>
      <HScroll $ml={19}>
        <Ico w={6} h={11} s="#999" sw={0}><path d="M6 0v11L0 5.5z" fill="#999" /></Ico>
        <HThumb />
        <Ico w={6} h={11} s="#999" sw={0}><path d="M0 0v11l6-5.5z" fill="#999" /></Ico>
      </HScroll>
    </TabBar>

    <StatusBar>
      <Slot $w={69}>Ready</Slot>
      <Slot $w={26}>
        <Ico w={21} h={25} s="#eee" sw={1.2}>
          <circle cx="10" cy="3" r="2.5" />
          <path d="M1 7l6 2h6l6-2M7 9v5l-3 9M13 9v5M7 14h6" />
          <path d="M14 18c0-2 4-2 4 0 0 2-2 1.5-2 4" />
        </Ico>
      </Slot>
      <Slot $w={1386}>Accessibility: Unavailable</Slot>
      <ViewButton $on>
        <Ico w={20} h={20} s="#eee" sw={1.6}><path d="M1 1h18v18H1zM1 7h18M1 13h18M7 1v18M13 1v18" /></Ico>
      </ViewButton>
      <ViewButton $ml={1}>
        <Ico w={20} h={20} s="#eee" sw={1.4}><path d="M1 1h18v18H1zM5 3h10v14H5zM7 7h6M7 10h6M7 13h6" /></Ico>
      </ViewButton>
      <ViewButton $ml={1}>
        <Ico w={20} h={20} s="#eee" sw={1.4}><path d="M1 1h18v18H1zM1 13h12V1M7 1v12" /></Ico>
      </ViewButton>
      <Slot $w={11} $ml={9}><Ico w={11} h={2} s="#ddd"><path d="M0 1h11" /></Ico></Slot>
      <Slider $ml={6} />
      <Slot $w={13} $ml={5}><Ico w={13} h={13} s="#ddd"><path d="M6.5 0v13M0 6.5h13" /></Ico></Slot>
      <Slot $w={36} $ml={15}>43%</Slot>
    </StatusBar>

    <Taskbar>
      <PreviewTab />
      <TrayDot $ml={26} $bg="#2f8fe0" />
      <TrayDot $ml={41} $bg="#15506b" />
      <TrayDot $ml={118} $bg="#2b9be0" />
      <TrayDot $ml={33} $w={29} $h={5} $t={8} $square $bg="#f1f1f1" />
      <HoverApp $ml={19} />
      <TrayDot $ml={24} $bg="#c0392b" />
      <TrayDot $ml={583} $w={10} $bg="#b11" />
      <ClockText $ml={358}>04:53</ClockText>
    </Taskbar>

    <Watermark>
      <WatermarkAr>مستقل</WatermarkAr>
      <WatermarkEn>mostaql.com</WatermarkEn>
    </Watermark>
  </Page>
);

export default App;
